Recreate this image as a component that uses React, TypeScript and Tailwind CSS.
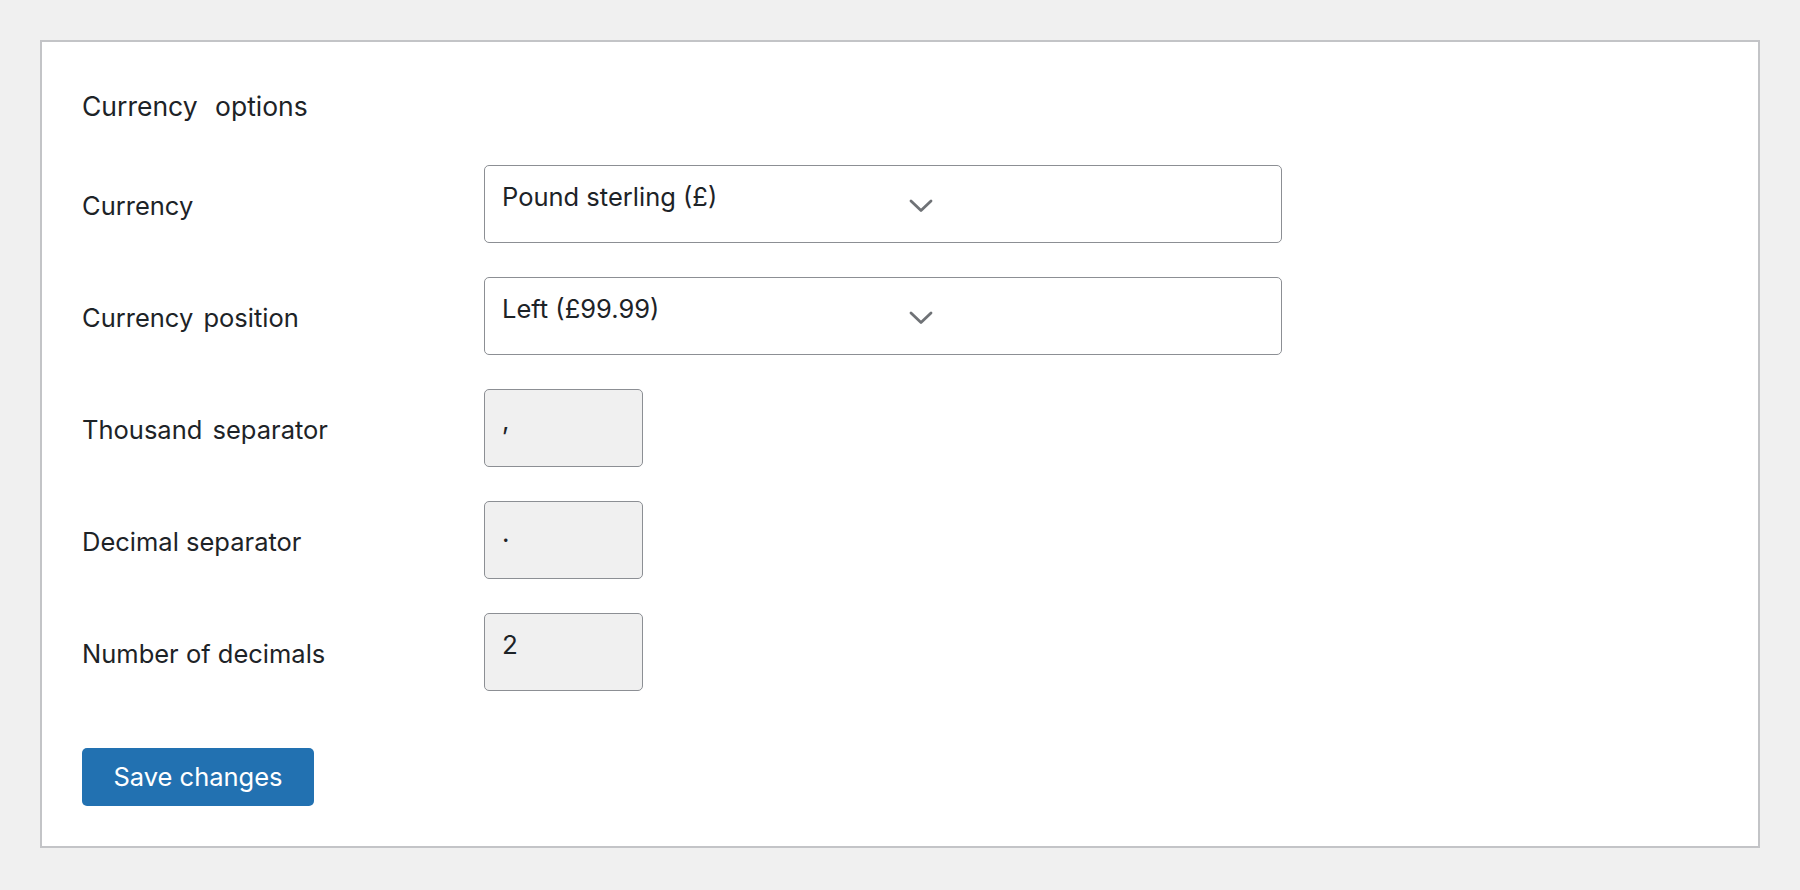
type FieldRow = {
  label: React.ReactNode;
  kind: "select" | "text";
  value: string;
};

const rows: FieldRow[] = [
  { label: "Currency", kind: "select", value: "Pound sterling (£)" },
  {
    label: (
      <>
        Currency<span className="inline-block w-[3px]" /> position
      </>
    ),
    kind: "select",
    value: "Left (£99.99)",
  },
  {
    label: (
      <>
        Thousand<span className="inline-block w-[3px]" /> separator
      </>
    ),
    kind: "text",
    value: ",",
  },
  { label: "Decimal separator", kind: "text", value: "." },
  { label: "Number of decimals", kind: "text", value: "2" },
];

// Fake select: the value sits near the top, the chevron floats mid-box
const SelectBox = ({ value }: { value: string }) => (
  <div className="relative h-[78px] w-[798px] rounded-[5px] border border-[#8c8f94] bg-white pl-[17px] pt-[13px] text-[25.5px] leading-[36px] text-[#1d2327]">
    {value}
    <svg
      className="absolute left-[424px] top-[33px]"
      width="24"
      height="14"
      viewBox="0 0 24 14"
      fill="none"
    >
      <path
        d="M2 2l10 9.5L22 2"
        stroke="#6f7276"
        strokeWidth="2.8"
        strokeLinecap="round"
        strokeLinejoin="round"
      />
    </svg>
  </div>
);

const TextBox = ({ value }: { value: string }) => (
  <div className="h-[78px] w-[159px] rounded-[5px] border border-[#8c8f94] bg-[#f0f0f0] pl-[17px] pt-[13px] text-[26px] leading-[36px] text-[#1d2327]">
    {value}
  </div>
);

export default function App() {
  return (
    <div className="min-h-screen bg-[#f0f0f0] p-[40px] font-['Inter',sans-serif]">
      <div className="border-2 border-[#c3c4c7] bg-white px-[40px] pb-[40px] pt-[46px]">
        <h2 className="text-[26.5px] font-normal leading-[36px] text-[#1d2327]">
          Currency<span className="inline-block w-[10px]" /> options
        </h2>

        <div className="mt-[41px] flex flex-col gap-[34px]">
          {rows.map((row, i) => (
            <div key={i} className="flex">
              <div className="w-[402px] shrink-0 pt-[23px] text-[25.5px] font-normal leading-[36px] text-[#1d2327]">
                {row.label}
              </div>
              {row.kind === "select" ? (
                <SelectBox value={row.value} />
              ) : (
                <TextBox value={row.value} />
              )}
            </div>
          ))}
        </div>

        <button
          type="button"
          className="mt-[57px] h-[58px] w-[232px] rounded-[5px] bg-[#2271b1] text-[25.5px] leading-[36px] text-white"
        >
          Save changes
        </button>
      </div>
    </div>
  );
}
